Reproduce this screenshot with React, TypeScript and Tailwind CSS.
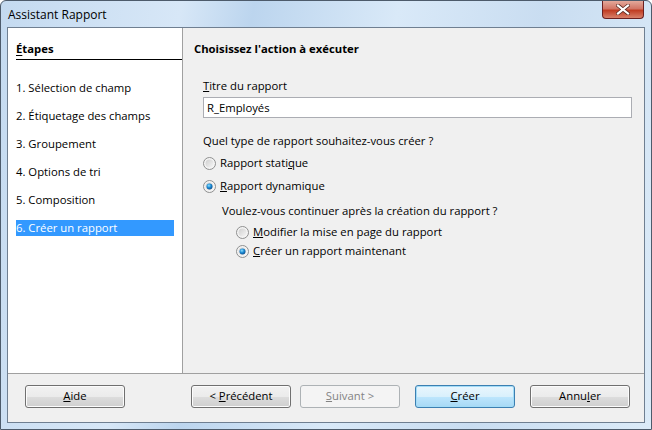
import React from 'react';

const font = { fontFamily: '"Open Sans", "Noto Sans", sans-serif' };

const Radio: React.FC<{ checked?: boolean }> = ({ checked }) => (
  <svg width="13" height="13" viewBox="0 0 13 13" className="shrink-0">
    <defs>
      <linearGradient id="rg" x1="0" y1="0" x2="1" y2="1">
        <stop offset="0" stopColor="#cfcfcf" />
        <stop offset="1" stopColor="#f6f6f6" />
      </linearGradient>
      <radialGradient id="dot" cx="0.4" cy="0.35" r="0.7">
        <stop offset="0" stopColor="#8fe0ff" />
        <stop offset="0.5" stopColor="#1b8ad3" />
        <stop offset="1" stopColor="#0d4c8a" />
      </radialGradient>
    </defs>
    <circle cx="6.5" cy="6.5" r="6" fill="#f4f4f4" stroke="#8e8f8f" strokeWidth="1" />
    <circle cx="6.5" cy="6.5" r="4" fill="url(#rg)" />
    {checked && <circle cx="6.5" cy="6.5" r="3" fill="url(#dot)" />}
  </svg>
);

const Btn: React.FC<{ children: React.ReactNode; variant?: 'default' | 'disabled' | 'focus' }> = ({ children, variant = 'default' }) => {
  const base = 'w-[100px] h-[23px] rounded-[3px] border flex items-center justify-center text-[11.3px]';
  if (variant === 'disabled') {
    return <div className={`${base} border-[#adb2b5] bg-[#f4f4f4] text-[#838383]`}>{children}</div>;
  }
  if (variant === 'focus') {
    return <div className={`${base} border-[#3c7fb1] bg-[linear-gradient(#eaf6fd_0%,#d9f0fc_50%,#bee6fd_50%,#a7d9f5_100%)] shadow-[inset_0_0_0_1px_#a3dcf7] text-black`}>{children}</div>;
  }
  return <div className={`${base} border-[#707070] bg-[linear-gradient(#f2f2f2_0%,#ebebeb_50%,#dddddd_50%,#cfcfcf_100%)] shadow-[inset_0_0_0_1px_#fcfcfc] text-black`}>{children}</div>;
};

const steps = ['1. Sélection de champ', '2. Étiquetage des champs', '3. Groupement', '4. Options de tri', '5. Composition', '6. Créer un rapport'];

export default function App() {
  return (
    <div style={font} className="w-[652px] h-[430px] flex flex-col bg-[linear-gradient(100deg,#c4daf0_0%,#d7e7f7_25%,#bcd5ee_35%,#d9e9f8_55%,#c9ddf1_75%,#dcebf8_100%)] border border-[#4d5b6b] rounded-t-[6px] text-black overflow-hidden">
      {/* Title bar */}
      <div className="h-[26px] flex items-start justify-between">
        <span className="pl-[7px] pt-[6px] text-[12px] leading-[16px]">Assistant Rapport</span>
        <div className="mr-[7px] w-[42px] h-[18px] rounded-b-[4px] border border-t-0 border-[#6b2020] bg-[linear-gradient(#e4a99b_0%,#d27565_45%,#c03c22_55%,#d8806a_100%)] flex items-center justify-center">
          <svg width="14" height="11" viewBox="0 0 14 11">
            <path d="M2 1.5 L12 9.5 M12 1.5 L2 9.5" stroke="#5a2a22" strokeWidth="3.6" strokeLinecap="square" />
            <path d="M2 1.5 L12 9.5 M12 1.5 L2 9.5" stroke="#ffffff" strokeWidth="2.2" strokeLinecap="square" />
          </svg>
        </div>
      </div>
      {/* Client area */}
      <div className="flex-1 mx-[6px] mb-[6px] border border-[#6f7f91] bg-[#f0f0f0] flex flex-col text-[11.3px]">
        <div className="flex-1 flex">
          <div className="w-[175px] bg-white border-r border-[#a0a0a0] pl-[8px] pt-[13px]">
            <div className="border-b border-black pb-[2px] font-bold leading-[16px]">
              <u className="underline-offset-2">É</u>tapes
            </div>
            <div className="mt-[20px] flex flex-col gap-[12px] pr-[8px]">
              {steps.map((s, i) => (
                <div key={s} className={`h-[16px] leading-[16px] ${i === steps.length - 1 ? 'bg-[#3399ff] text-white' : ''}`}>
                  {s}
                </div>
              ))}
            </div>
          </div>
          <div className="flex-1 pt-[13px] pl-[11px] pr-[12px] leading-[16px]">
            <div className="font-bold">Choisissez l'action à exécuter</div>
            <div className="ml-[9px] mt-[21px]">
              <u>T</u>itre du rapport
            </div>
            <div className="ml-[9px] mt-[3px] h-[21px] border border-[#abadb3] bg-white pl-[3px] flex items-center">R_Employés</div>
            <div className="ml-[9px] mt-[15px]">Quel type de rapport souhaitez-vous créer ?</div>
            <div className="ml-[9px] mt-[6px] flex items-center gap-[4px] h-[16px]">
              <Radio /> <span>Rapport stati<u>q</u>ue</span>
            </div>
            <div className="ml-[9px] mt-[7px] flex items-center gap-[4px] h-[16px]">
              <Radio checked /> <span><u>R</u>apport dynamique</span>
            </div>
            <div className="ml-[28px] mt-[9px]">Voulez-vous continuer après la création du rapport ?</div>
            <div className="ml-[42px] mt-[5px] flex items-center gap-[4px] h-[16px]">
              <Radio /> <span><u>M</u>odifier la mise en page du rapport</span>
            </div>
            <div className="ml-[42px] mt-[3px] flex items-center gap-[4px] h-[16px]">
              <Radio checked /> <span><u>C</u>réer un rapport maintenant</span>
            </div>
          </div>
        </div>
        <div className="h-[49px] border-t border-[#a0a0a0] flex items-start pt-[11px] pl-[17px]">
          <Btn><span><u>A</u>ide</span></Btn>
          <div className="ml-[66px] flex gap-[9px]">
            <Btn><span>&lt; <u>P</u>récédent</span></Btn>
            <Btn variant="disabled"><span><u>S</u>uivant &gt;</span></Btn>
          </div>
          <div className="ml-[15px] flex gap-[15px]">
            <Btn variant="focus"><span><u>C</u>réer</span></Btn>
            <Btn><span>Annu<u>l</u>er</span></Btn>
          </div>
        </div>
      </div>
    </div>
  );
}
